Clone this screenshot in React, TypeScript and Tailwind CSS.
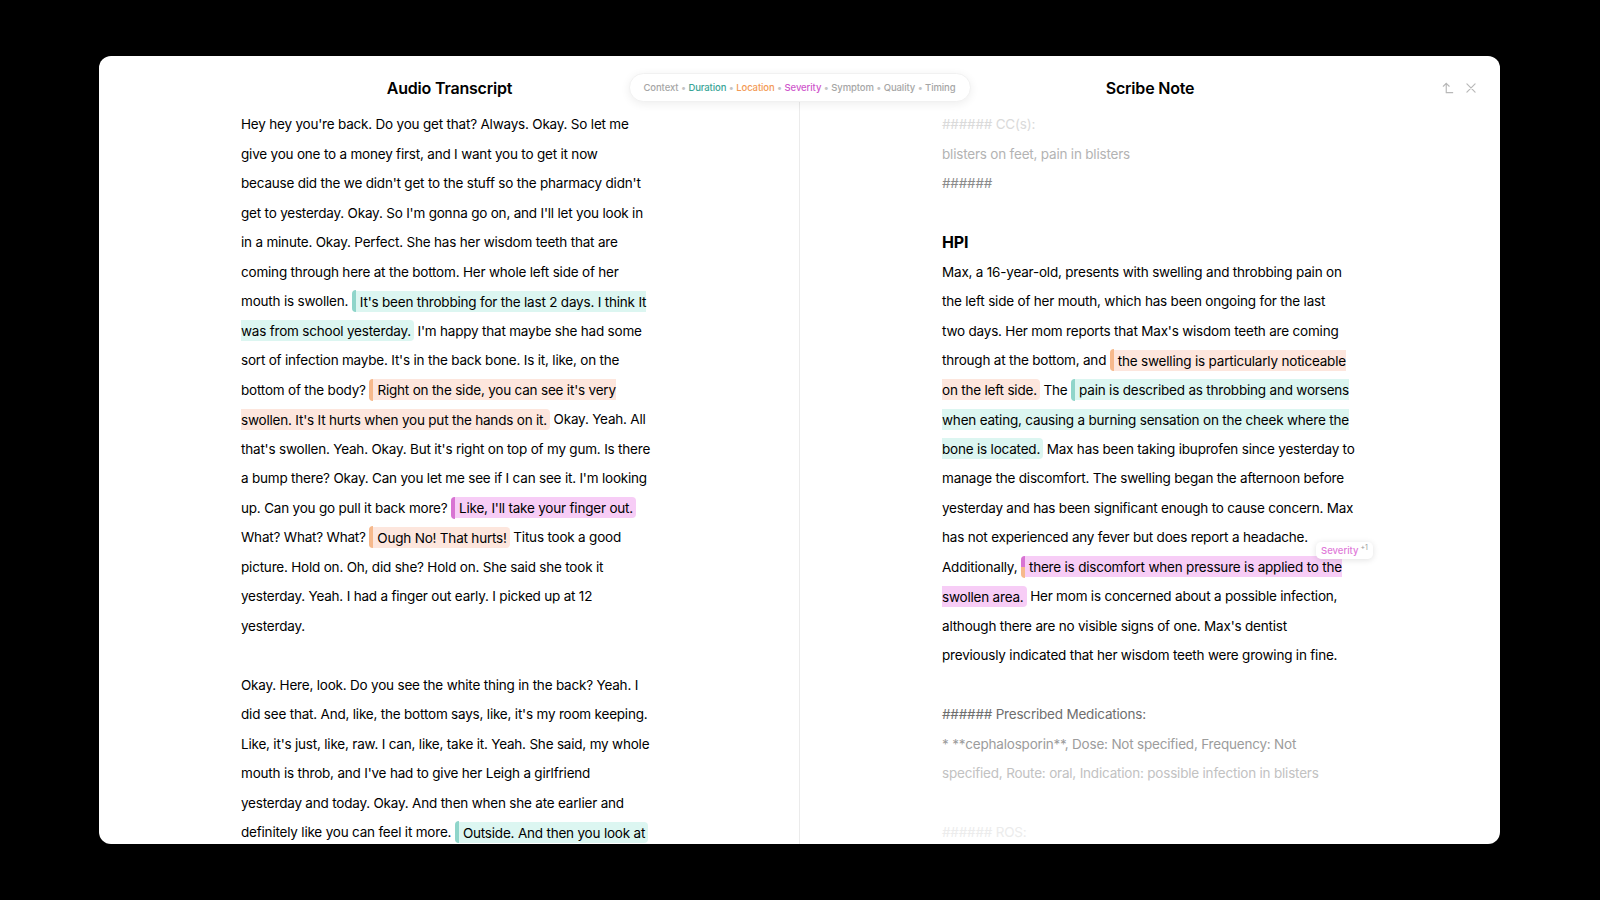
import React from "react";

type Tone = "teal" | "peach" | "pink";

const BG: Record<Tone, string> = {
  teal: "bg-[#dcf6f1]",
  peach: "bg-[#fde6dd]",
  pink: "bg-[#f7cdf6]",
};
const BAR: Record<Tone, string> = {
  teal: "bg-[#8fd5ca]",
  peach: "bg-[#f6b98c]",
  pink: "bg-[#d873d3]",
};

function HL({ tone, split, children }: { tone: Tone; split?: boolean; children: React.ReactNode }) {
  return (
    <span className={`${BG[tone]} rounded-[4px] py-[2.5px] pr-[3px]`}>
      <span
        className={`inline-block w-[4px] h-[22px] align-[-6px] rounded-l-[4px] mr-[4px] ${
          split ? "bg-[linear-gradient(#d873d3_50%,#f6b98c_50%)]" : BAR[tone]
        }`}
      />
      {children}
    </span>
  );
}

function Dot() {
  return <span className="mx-[2.5px] text-[#c4c4c4]">•</span>;
}

export default function App() {
  const font = { fontFamily: "Inter, 'Noto Sans', sans-serif" };
  return (
    <div className="w-[1600px] h-[900px] bg-black pt-[56px] pl-[99px]" style={font}>
      <div className="relative w-[1401px] h-[788px] bg-white rounded-[12px] overflow-hidden flex">
        {/* legend pill */}
        <div className="absolute z-10 top-[17px] left-1/2 -translate-x-1/2 h-[29px] pt-[1px] px-[14px] flex items-center rounded-full bg-white border border-[#f1f1f1] shadow-[0_2px_10px_rgba(0,0,0,0.07)] text-[9.5px] font-medium tracking-[-0.1px] whitespace-nowrap">
          <span className="text-[#a6a6a6]">Context</span>
          <Dot />
          <span className="text-[#3aa597]">Duration</span>
          <Dot />
          <span className="text-[#f39a55]">Location</span>
          <Dot />
          <span className="text-[#cf57cc]">Severity</span>
          <Dot />
          <span className="text-[#a6a6a6]">Symptom</span>
          <Dot />
          <span className="text-[#a6a6a6]">Quality</span>
          <Dot />
          <span className="text-[#a6a6a6]">Timing</span>
        </div>

        {/* Left column */}
        <div className="w-[701px] flex flex-col">
          <div className="h-[46px] pt-[20px] flex justify-center">
            <h2 className="h-[24px] leading-[24px] text-[16px] font-semibold text-black tracking-[-0.2px]">Audio Transcript</h2>
          </div>
          <div className="flex-1 border-r border-[#ebebeb] pt-[8px] flex justify-center overflow-hidden">
            <div className="w-[416px] text-[13.5px] tracking-[-0.2px] leading-[29.5px] text-black whitespace-nowrap">
              <p>
                Hey hey you're back. Do you get that? Always. Okay. So let me<br />
                give you one to a money first, and I want you to get it now<br />
                because did the we didn't get to the stuff so the pharmacy didn't<br />
                get to yesterday. Okay. So I'm gonna go on, and I'll let you look in<br />
                in a minute. Okay. Perfect. She has her wisdom teeth that are<br />
                coming through here at the bottom. Her whole left side of her<br />
                mouth is swollen.{" "}
                <HL tone="teal">
                  It's been throbbing for the last 2 days. I think It<br />
                  was from school yesterday.
                </HL>{" "}
                I'm happy that maybe she had some<br />
                sort of infection maybe. It's in the back bone. Is it, like, on the<br />
                bottom of the body?{" "}
                <HL tone="peach">
                  Right on the side, you can see it's very<br />
                  swollen. It's It hurts when you put the hands on it.
                </HL>{" "}
                Okay. Yeah. All<br />
                that's swollen. Yeah. Okay. But it's right on top of my gum. Is there<br />
                a bump there? Okay. Can you let me see if I can see it. I'm looking<br />
                up. Can you go pull it back more? <HL tone="pink">Like, I'll take your finger out.</HL>
                <br />
                What? What? What? <HL tone="peach">Ough No! That hurts!</HL> Titus took a good<br />
                picture. Hold on. Oh, did she? Hold on. She said she took it<br />
                yesterday. Yeah. I had a finger out early. I picked up at 12<br />
                yesterday.
              </p>
              <p className="mt-[29.5px]">
                Okay. Here, look. Do you see the white thing in the back? Yeah. I<br />
                did see that. And, like, the bottom says, like, it's my room keeping.<br />
                Like, it's just, like, raw. I can, like, take it. Yeah. She said, my whole<br />
                mouth is throb, and I've had to give her Leigh a girlfriend<br />
                yesterday and today. Okay. And then when she ate earlier and<br />
                definitely like you can feel it more.{" "}
                <HL tone="teal">Outside. And then you look at</HL>
              </p>
            </div>
          </div>
        </div>

        {/* Right column */}
        <div className="flex-1 flex flex-col relative">
          <div className="h-[46px] pt-[20px] flex justify-center relative">
            <h2 className="h-[24px] leading-[24px] text-[16px] font-semibold text-black tracking-[-0.2px]">Scribe Note</h2>
            <div className="absolute right-[22px] top-[25px] flex items-center gap-[9px] text-[#b8b8b8]">
              <svg width="14" height="14" viewBox="0 0 24 24" fill="none" stroke="currentColor" strokeWidth="2" strokeLinecap="round" strokeLinejoin="round">
                <polyline points="4 9 9 4 14 9" />
                <path d="M9 4v16h11" />
              </svg>
              <svg width="14" height="14" viewBox="0 0 24 24" fill="none" stroke="currentColor" strokeWidth="2" strokeLinecap="round">
                <path d="M5 5l14 14M19 5L5 19" />
              </svg>
            </div>
          </div>
          <div className="flex-1 pt-[8px] flex justify-center overflow-hidden">
            <div className="relative w-[416px] text-[13.5px] tracking-[-0.2px] leading-[29.5px] text-black whitespace-nowrap">
              <div className="text-[#dadada]">###### CC(s):</div>
              <div className="text-[#b3b3b3]">blisters on feet, pain in blisters</div>
              <div className="text-[#8a8a8a]">######</div>
              <div>&nbsp;</div>
              <h3 className="text-[16px] font-bold">HPI</h3>
              <p>
                Max, a 16-year-old, presents with swelling and throbbing pain on<br />
                the left side of her mouth, which has been ongoing for the last<br />
                two days. Her mom reports that Max's wisdom teeth are coming<br />
                through at the bottom, and{" "}
                <HL tone="peach">
                  the swelling is particularly noticeable<br />
                  on the left side.
                </HL>{" "}
                The{" "}
                <HL tone="teal">
                  pain is described as throbbing and worsens<br />
                  when eating, causing a burning sensation on the cheek where the<br />
                  bone is located.
                </HL>{" "}
                Max has been taking ibuprofen since yesterday to<br />
                manage the discomfort. The swelling began the afternoon before<br />
                yesterday and has been significant enough to cause concern. Max<br />
                has not experienced any fever but does report a headache.<br />
                Additionally,{" "}
                <HL tone="pink" split>
                  there is discomfort when pressure is applied to the<br />
                  swollen area.
                </HL>{" "}
                Her mom is concerned about a possible infection,<br />
                although there are no visible signs of one. Max's dentist<br />
                previously indicated that her wisdom teeth were growing in fine.
              </p>
              <div>&nbsp;</div>
              <div className="text-[#6e6e6e]">###### Prescribed Medications:</div>
              <div className="text-[#9c9c9c]">* **cephalosporin**, Dose: Not specified, Frequency: Not</div>
              <div className="text-[#c2c2c2]">specified, Route: oral, Indication: possible infection in blisters</div>
              <div>&nbsp;</div>
              <div className="text-[#ececec]">###### ROS:</div>

              <div className="absolute left-[374px] top-[432px] h-[17px] px-[5px] flex items-start rounded-[5px] bg-white shadow-[0_1px_6px_rgba(0,0,0,0.12)] leading-[17px] tracking-normal">
                <span className="text-[9.5px] font-medium text-[#e07bd9]">Severity</span>
                <span className="ml-[2px] text-[7px] leading-[12px] text-[#9a9a9a]">+1</span>
              </div>
            </div>
          </div>
        </div>
      </div>
    </div>
  );
}
